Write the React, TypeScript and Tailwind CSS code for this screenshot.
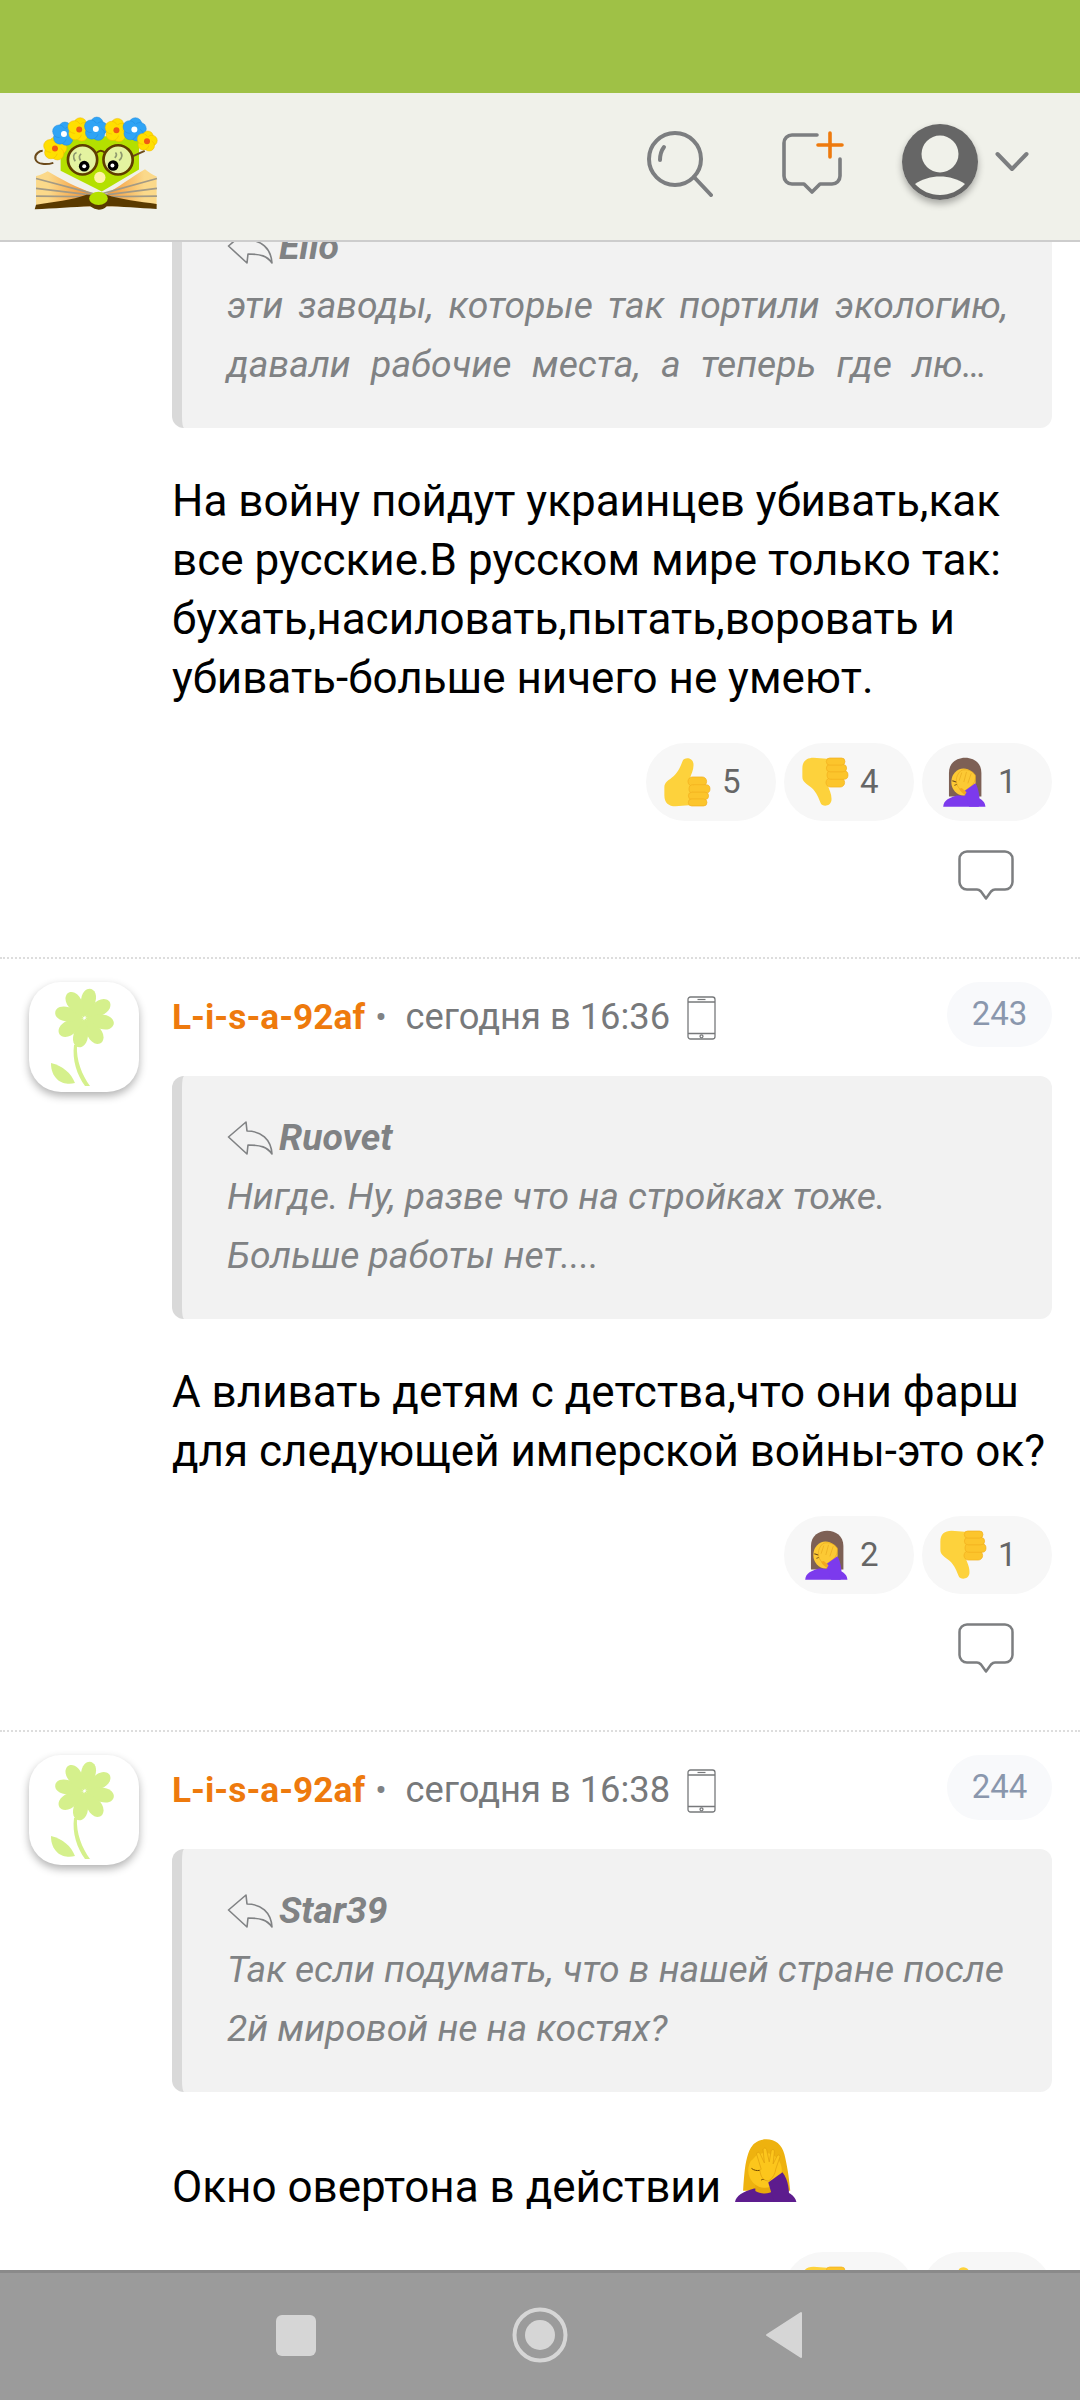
const ThumbShape = () => (
  <>
    <path d="M42 125C42 110 55 105 70 92C85 78 90 62 96 48C100 36 125 36 128 55C130 72 122 85 118 98L125 178L75 182C55 182 42 172 42 150Z" fill="#fdd23c" />
    <rect x="112" y="95" width="55" height="27" rx="13" fill="#fcc52c" stroke="#f2ae1c" strokeWidth="2" />
    <rect x="115" y="118" width="62" height="25" rx="12" fill="#fcc52c" stroke="#f2ae1c" strokeWidth="2" />
    <rect x="113" y="140" width="60" height="22" rx="11" fill="#fcc52c" stroke="#f2ae1c" strokeWidth="2" />
    <rect x="113" y="160" width="55" height="21" rx="10" fill="#fcc52c" stroke="#f2ae1c" strokeWidth="2" />
  </>
);

const ThumbUp = () => (
  <svg width="48" height="50" viewBox="38 36 142 148">
    <ThumbShape />
  </svg>
);

// same hand flipped: thumb points down, fingers stay on the right
const ThumbDown = () => (
  <svg width="48" height="50" viewBox="38 36 142 148">
    <g transform="translate(0 220) scale(1 -1)">
      <ThumbShape />
    </g>
  </svg>
);

const Facepalm = () => (
  <svg className="ml-[3px]" width="43" height="50" viewBox="65 38 126 148">
    <path d="M82 155V85C82 55 105 40 130 40C155 40 178 55 178 85V155Z" fill="#7d6055" />
    <path d="M65 185C66 165 85 158 105 152H150C170 158 188 165 190 185Z" fill="#7c3aed" />
    <ellipse cx="125" cy="112" rx="36" ry="40" fill="#fcc934" />
    <path d="M92 108l14 5M98 122l8-3" stroke="#6b4a1a" strokeWidth="3" fill="none" />
    <path d="M108 124C100 108 104 90 118 78C132 72 152 78 160 92C162 106 156 118 146 126L126 140C118 138 112 132 108 124Z" fill="#fcc934" stroke="#e7a81e" strokeWidth="2" />
    <path d="M120 84l-8 24M134 82l-8 30M148 86l-10 30" stroke="#e7a81e" strokeWidth="2" fill="none" />
    <path d="M126 140L160 116C170 130 176 165 170 185H142Z" fill="#7c3aed" />
    <path d="M112 132c4 8 10 14 18 18l4-8-14-12z" fill="#f3a91f" />
  </svg>
);

const FacepalmBlonde = () => (
  <svg width="62" height="66" viewBox="25 22 192 198">
    <path d="M50 185C54 130 56 100 66 70C76 40 96 26 122 26C150 26 170 42 178 72C186 105 192 140 196 185Z" fill="#eeb20f" />
    <path d="M25 220C28 200 50 188 84 178H160C190 188 212 200 215 220Z" fill="#5d1c8e" />
    <path d="M88 160h56v26c-14 10-40 10-56 0z" fill="#e8a90c" />
    <ellipse cx="118" cy="122" rx="52" ry="54" fill="#fcc61c" />
    <path d="M66 96C84 90 96 70 104 44L84 40C72 56 66 76 66 96Z" fill="#eeb20f" />
    <path d="M76 116c8 6 16 8 26 6M106 152c6-3 12-3 16 0" stroke="#6b4300" strokeWidth="3" fill="none" />
    <path d="M106 118L92 72c-1-6 7-8 10-3l14 30-4-40c0-7 9-8 11-1l8 38 6-34c2-7 11-5 10 2l-4 38 12-24c3-6 11-3 9 3l-13 38c-2 14-8 26-22 36-16 0-24-12-27-32z" fill="#fcc61c" stroke="#dd9c0c" strokeWidth="2" />
    <path d="M128 160L172 128C190 150 196 190 190 220H146Z" fill="#5d1c8e" />
  </svg>
);

const BubbleOutline = () => (
  <svg width="56" height="52" viewBox="0 0 56 52" fill="none" stroke="#7c7e80" strokeWidth="2.5" strokeLinejoin="round">
    <path d="M9 1.5h38a7.5 7.5 0 0 1 7.5 7.5v23a7.5 7.5 0 0 1-7.5 7.5H37c-2 0-3 1-4 2l-5 7-5-7c-1-1-2-2-4-2H9A7.5 7.5 0 0 1 1.5 32V9A7.5 7.5 0 0 1 9 1.5z" />
  </svg>
);

const ReplyArrow = () => (
  <svg width="46" height="34" viewBox="0 0 46 34" fill="none" stroke="#808284" strokeWidth="1.6" strokeLinejoin="round">
    <path d="M1.5 16L19 1l1 9c14 0 24 8 25 23-5-7-11-9-24-9l-1 9z" />
  </svg>
);

const PhoneIcon = () => (
  <svg width="29" height="44" viewBox="0 0 29 44" fill="none" stroke="#77797b" strokeWidth="1.3">
    <rect x="1" y="1" width="27" height="42" rx="2.5" />
    <path d="M1 6h27M1 37.5h27" />
    <path d="M10.5 3.5h8" strokeWidth="1.2" />
    <circle cx="14.5" cy="40.3" r="1.5" />
  </svg>
);

const Avatar = () => (
  <div className="h-[110px] w-[110px] shrink-0 rounded-[32px] bg-white shadow-[0_4px_8px_rgba(0,0,0,0.3)]">
    <svg width="110" height="110" viewBox="0 0 110 110">
      {[0, 45, 90, 135, 180, 225, 270, 315].map((a) => (
        <path key={a} d="M55.5 35C49 27 46 16 50 9.500C53 5 58 5 61 9.500C65 16 62 27 55.500 35Z" fill="#d5f08c" transform={`rotate(${a + 12} 55.5 36)`} />
      ))}
      <path d="M45 63c-2 15 3 30 11 41h5c-8-11-14-26-13-41z" fill="#d5f08c" />
      <path d="M22 81c12 3 20 10 24 20-10 3-24-2-24-20z" fill="#d5f08c" />
    </svg>
  </div>
);

const Petals = ({ x, y, fill, core, r = 19, d = 17 }: { x: number; y: number; fill: string; core: string; r?: number; d?: number }) => (
  <g transform={`translate(${x} ${y})`}>
    {[0, 72, 144, 216, 288].map((a) => (
      <circle key={a} cx={Math.cos(((a - 80) * Math.PI) / 180) * d} cy={Math.sin(((a - 80) * Math.PI) / 180) * d} r={r} fill={fill} stroke={fill === "#ffdf00" ? "#efb400" : "#2189dd"} strokeWidth="1.5" />
    ))}
    <circle cx="0" cy="0" r={r - 2} fill={fill} />
    <circle r="9" fill={core} />
  </g>
);

const Logo = () => (
  <svg width="127" height="98" viewBox="100 155 380 295">
    <defs>
      <linearGradient id="pg" x1="0" y1="0" x2="1" y2="0">
        <stop offset="0.1" stopColor="#fbd98a" />
        <stop offset="0.4" stopColor="#f59a3c" />
        <stop offset="0.6" stopColor="#f59a3c" />
        <stop offset="0.9" stopColor="#fbd98a" />
      </linearGradient>
    </defs>
    <path d="M108 345c14-4 24-8 35-15 36 22 90 50 145 70h30c34-20 78-52 118-76 10 8 22 16 35 22v90H108z" fill="url(#pg)" />
    <path d="M182 225h236v100l-112 66-124-62z" fill="#b4e000" />
    <path d="M108 352l180 48M108 382l170 20M108 405l170 2M472 352l-172 48M472 382l-160 20M472 405l-160 2" stroke="#a39a85" strokeWidth="5" fill="none" />
    <ellipse cx="300" cy="349" rx="17" ry="17" fill="#fff2a8" />
    <path d="M104 445l4-14c50-8 110-14 152-30h60c40 14 100 20 151 28v15c-50-2-110-8-150-8-8 8-16 10-24 10s-18-4-26-10c-50 2-110 7-167 9z" fill="#5a3a00" />
    <ellipse cx="296" cy="412" rx="28" ry="20" fill="#b4e000" />
    <path d="M160 305c-20 6-50 6-54-12-3-16 14-24 22-24" stroke="#6b4a1a" strokeWidth="6" fill="none" />
    <path d="M400 285l35-16" stroke="#6b4a1a" strokeWidth="6" />
    <Petals x={165} y={262} fill="#ffdf00" core="#f05a14" />
    <Petals x={192} y={218} fill="#2fa4f5" core="#ffffff" />
    <Petals x={238} y={205} fill="#ffdf00" core="#f05a14" />
    <Petals x={288} y={203} fill="#2fa4f5" core="#ffffff" />
    <Petals x={350} y={207} fill="#ffdf00" core="#f05a14" />
    <Petals x={404} y={205} fill="#2fa4f5" core="#ffffff" />
    <Petals x={442} y={240} fill="#ffdf00" core="#f05a14" r={16} d={15} />
    <circle cx="248" cy="296" r="44" fill="#e4f3a0" stroke="#5f3d00" strokeWidth="8" />
    <circle cx="355" cy="296" r="44" fill="#e4f3a0" stroke="#5f3d00" strokeWidth="8" />
    <path d="M290 275c8-8 18-8 26 0" stroke="#5f3d00" strokeWidth="6" fill="none" />
    <path d="M226 300c-8-12-6-22 4-26M242 298c-6-10-4-16 2-20M358 298c10-8 10-18 4-26M345 290c6-6 6-12 2-16" stroke="#8f9a70" strokeWidth="5" fill="none" />
    <circle cx="253" cy="315" r="16" fill="#000" />
    <circle cx="253" cy="315" r="6" fill="#fff" />
    <circle cx="340" cy="313" r="16" fill="#000" />
    <circle cx="338" cy="313" r="6" fill="#fff" />
  </svg>
);

const Header = () => (
  <header className="relative z-10 flex h-[149px] shrink-0 items-center border-b-2 border-[#cdcdcd] bg-[#f0f1ea] pr-[51px] pb-[10px] pl-[33px]">
    <Logo />
    <div className="ml-auto flex items-center">
      <svg className="mt-[5px]" width="66" height="66" viewBox="0 0 66 66" fill="none" stroke="#7c7e80" strokeWidth="4" strokeLinecap="round">
        <circle cx="28" cy="28" r="26" />
        <path d="M47 46l17 18" />
        <path d="M13 29c0-4 1-9 4-13" />
      </svg>
      <svg className="mt-[5px] ml-[67px]" width="64" height="66" viewBox="0 0 64 66" fill="none" stroke="#7c7e80" strokeWidth="3.6" strokeLinecap="round" strokeLinejoin="round">
        <path d="M37 4H12a8 8 0 0 0-8 8v33a8 8 0 0 0 8 8h12l8 8 8-8h12a8 8 0 0 0 8-8V28" />
        <path d="M50 2v24M38 14h24" stroke="#ee7a0d" />
      </svg>
      <div className="ml-[58px] flex h-[76px] w-[76px] items-center justify-center rounded-full shadow-[0_4px_7px_rgba(0,0,0,0.3)]">
        <svg width="76" height="76" viewBox="0 0 76 76">
          <circle cx="38" cy="38" r="38" fill="#666666" />
          <circle cx="38" cy="30" r="18.5" fill="#f0f1ea" />
          <path d="M13 60c14-10 36-10 50 0-7 7-15 11-25 11s-18-4-25-11z" fill="#f0f1ea" />
        </svg>
      </div>
      <svg className="ml-[17px]" width="34" height="22" viewBox="0 0 34 22" fill="none" stroke="#7c7e80" strokeWidth="4" strokeLinecap="round" strokeLinejoin="round">
        <path d="M2.5 3L17 18 31.5 3" />
      </svg>
    </div>
  </header>
);

const Pill = ({ icon, count }: { icon: React.ReactNode; count?: number }) => (
  <div className="flex h-[78px] w-[130px] items-center gap-[11px] rounded-[39px] bg-[#f7f7f7] pl-[17px] text-[33px] text-[#666666]">
    <span className="flex w-[48px] justify-center">{icon}</span>
    {count !== undefined && <span>{count}</span>}
  </div>
);

const Quote = ({ author, lines, justify }: { author: string; lines: string[]; justify?: boolean }) => (
  <div className="h-[243px] rounded-[12px] border-l-[10px] border-[#d9d9d9] bg-[#f2f2f2] pt-[32px] pr-[44px] pl-[45px] text-[37.3px] leading-[59px] text-[#808284] italic">
    <div className="flex h-[59px] items-center gap-[6px]">
      <ReplyArrow />
      <span className="font-bold">{author}</span>
    </div>
    {lines.map((line, i) => (
      <div key={line} className={justify ? (i === 0 ? "text-justify [text-align-last:justify]" : "mr-[21px] text-justify [text-align-last:justify]") : "whitespace-nowrap"}>{line}</div>
    ))}
  </div>
);

const Comment = ({ time, num, author, lines, justify, children, pills, noMeta }: { time?: string; num?: number; author: string; lines: string[]; justify?: boolean; children: React.ReactNode; pills: React.ReactNode; noMeta?: boolean }) => (
  <article className="flex pr-[28px] pl-[29px]">
    <div className="w-[143px] shrink-0 pt-[23px]">{!noMeta && <Avatar />}</div>
    <div className="min-w-0 flex-1">
      {!noMeta && (
        <div className="flex h-[117px] items-center">
          <span className="text-[35.3px] font-bold text-[#ee7a0d]">L-i-s-a-92af</span>
          <span className="ml-[10px] text-[34px] text-[#808284]">•</span>
          <span className="ml-[19px] text-[36.3px] text-[#77797b]">сегодня в {time}</span>
          <span className="ml-[17px]"><PhoneIcon /></span>
          <span className="mt-[-7px] ml-auto flex h-[65px] w-[105px] items-center justify-center rounded-[33px] bg-[#f8f9fb] text-[33px] text-[#8a97ad]">{num}</span>
        </div>
      )}
      <Quote author={author} lines={lines} justify={justify} />
      <div className="pt-[44px] text-[44px] leading-[59px] text-black">{children}</div>
      <div className="flex justify-end gap-[8px] pt-[35px]">{pills}</div>
      <div className="flex justify-end pt-[29px] pr-[38px]"><BubbleOutline /></div>
    </div>
  </article>
);

const Separator = () => <div className="mt-[55px] border-t-2 border-dotted border-[#dddddd]" />;

export default function App() {
  return (
    <div className="flex h-[2400px] w-[1080px] flex-col overflow-hidden bg-white font-['Roboto',sans-serif]">
      <div className="h-[93px] shrink-0 bg-[#9fc146]" />
      <Header />
      <main className="min-h-0 flex-1 overflow-hidden">
        <div className="mt-[-57px]">
          <Comment
            noMeta
            author="Ello"
            justify
            lines={["эти заводы, которые так портили экологию,", "давали рабочие места, а теперь где лю…"]}
            pills={
              <>
                <Pill icon={<ThumbUp />} count={5} />
                <Pill icon={<ThumbDown />} count={4} />
                <Pill icon={<Facepalm />} count={1} />
              </>
            }
          >
            <p>На войну пойдут украинцев убивать,как</p>
            <p>все русские.В русском мире только так:</p>
            <p>бухать,насиловать,пытать,воровать и</p>
            <p>убивать-больше ничего не умеют.</p>
          </Comment>
        </div>
        <Separator />
        <Comment
          time="16:36"
          num={243}
          author="Ruovet"
          lines={["Нигде. Ну, разве что на стройках тоже.", "Больше работы нет...."]}
          pills={
            <>
              <Pill icon={<Facepalm />} count={2} />
              <Pill icon={<ThumbDown />} count={1} />
            </>
          }
        >
          <p>А вливать детям с детства,что они фарш</p>
          <p>для следующей имперской войны-это ок?</p>
        </Comment>
        <Separator />
        <Comment
          time="16:38"
          num={244}
          author="Star39"
          lines={["Так если подумать, что в нашей стране после", "2й мировой не на костях?"]}
          pills={
            <>
              <Pill icon={<ThumbDown />} />
              <Pill icon={<ThumbUp />} />
            </>
          }
        >
          <div className="flex h-[81px] items-end">
            <span>Окно овертона в действии</span>
            <span className="mb-[14px] ml-[14px]">
              <FacepalmBlonde />
            </span>
          </div>
        </Comment>
      </main>
      <footer className="flex h-[130px] shrink-0 items-center justify-center border-t-[3px] border-[#8a8a8a] bg-[#9b9b9b] pr-[2px] pb-[3px]">
        <div className="h-[41px] w-[40px] rounded-[6px] bg-[#d6d6d6]" />
        <svg className="ml-[196px]" width="56" height="56" viewBox="0 0 56 56">
          <circle cx="28" cy="28" r="25.5" fill="none" stroke="#d6d6d6" strokeWidth="4" />
          <circle cx="28" cy="28" r="15" fill="#d6d6d6" />
        </svg>
        <svg className="ml-[197px]" width="37" height="48" viewBox="0 0 37 48">
          <path d="M36 2v44L2 24z" fill="#d6d6d6" stroke="#d6d6d6" strokeWidth="2" strokeLinejoin="round" />
        </svg>
      </footer>
    </div>
  );
}
